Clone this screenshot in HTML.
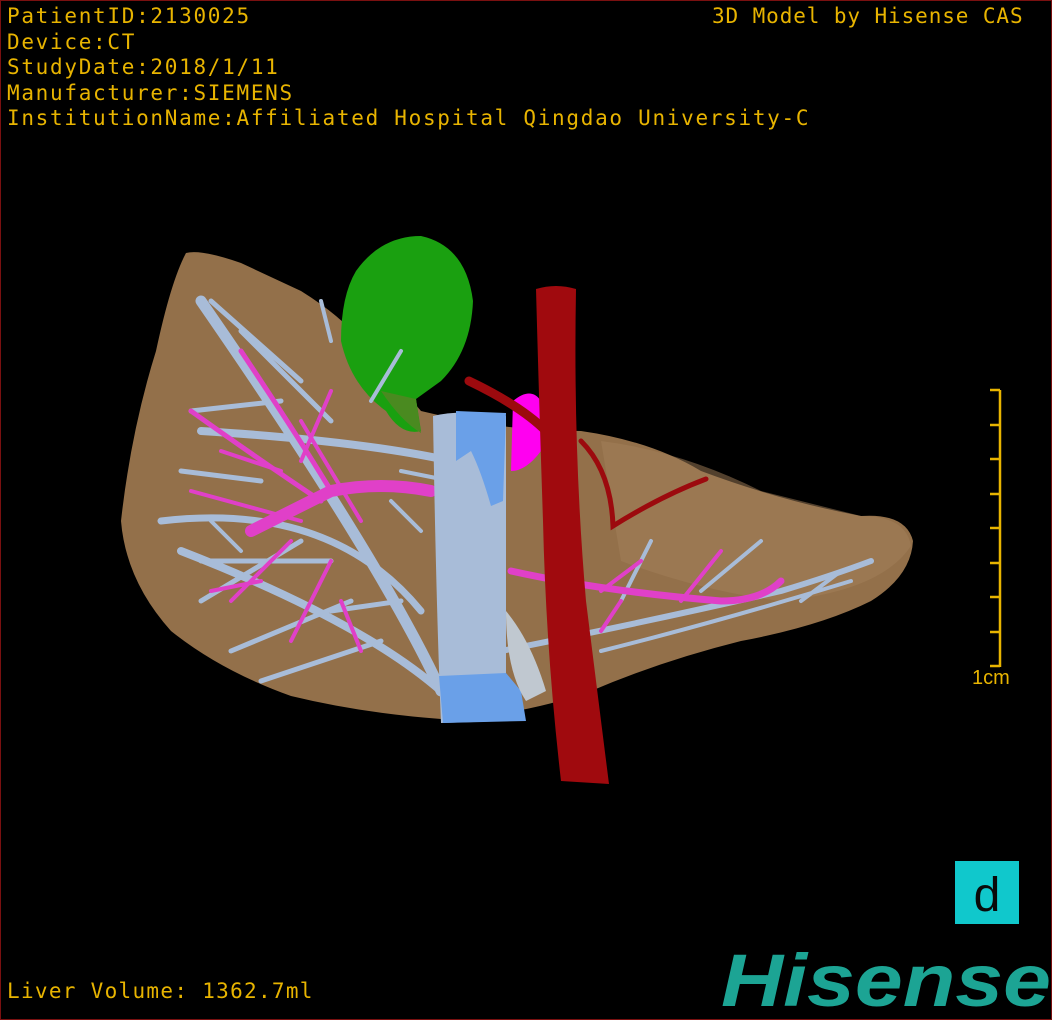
<!DOCTYPE html>
<html><head><meta charset="utf-8"><style>
html,body{margin:0;padding:0;background:#000;}
#w{position:relative;width:1052px;height:1020px;background:#000;overflow:hidden;box-sizing:border-box;border:1px solid #7a1010;}
.t{position:absolute;font-family:"DejaVu Sans Mono","Liberation Mono",monospace;color:#e8b400;font-size:21px;line-height:25.5px;white-space:pre;letter-spacing:1.7px;}
</style></head><body><div id="w">
<div class="t" style="left:6px;top:3px">PatientID:2130025
Device:CT
StudyDate:2018/1/11
Manufacturer:SIEMENS
InstitutionName:Affiliated Hospital Qingdao University-C</div>
<div class="t" style="left:711px;top:3px;letter-spacing:0.9px">3D Model by Hisense CAS</div>
<div class="t" style="left:6px;top:978px;letter-spacing:1.3px">Liver Volume: 1362.7ml</div>
<div class="t" style="left:971px;top:665px;font-family:'Liberation Sans',sans-serif;font-size:20px;letter-spacing:0">1cm</div>
<svg width="1052" height="1020" style="position:absolute;left:0;top:0" viewBox="0 0 1052 1020">
<g stroke="#e8b400" stroke-width="2.5" fill="none">
<line x1="999" y1="389" x2="999" y2="666"/>
<line x1="989" y1="389" x2="999" y2="389"/><line x1="989" y1="424" x2="999" y2="424"/>
<line x1="989" y1="458" x2="999" y2="458"/><line x1="989" y1="493" x2="999" y2="493"/>
<line x1="989" y1="527" x2="999" y2="527"/><line x1="989" y1="562" x2="999" y2="562"/>
<line x1="989" y1="596" x2="999" y2="596"/><line x1="989" y1="631" x2="999" y2="631"/>
<line x1="989" y1="665" x2="999" y2="665"/>
</g>
<path d="M185 252 Q200 248 240 262 L300 290 Q340 315 360 340 L420 410 Q500 430 580 430 Q650 440 700 470 Q780 500 860 515 Q905 512 912 540 Q910 575 870 600 Q820 625 740 640 Q660 660 590 690 Q520 715 440 718 Q360 712 290 695 Q220 670 170 630 Q125 580 120 520 Q130 430 155 350 Q170 280 185 252 Z" fill="#93704a"/>
<path d="M600 440 Q680 450 760 490 L860 515 Q905 515 910 545 Q880 590 780 600 Q700 590 620 560 Z" fill="#a3805a" opacity="0.5"/>
<path d="M355 270 Q380 235 420 235 Q465 245 472 300 Q470 350 440 380 L415 398 L420 430 Q400 435 385 410 Q350 385 340 340 Q340 295 355 270 Z" fill="#1aa010"/>
<path d="M380 390 Q400 420 420 432 L415 398 Z" fill="#4a8a20"/>
<g stroke="#a8bcd8" stroke-linecap="round" fill="none">
<path d="M440 690 Q380 560 200 300" stroke-width="11"/>
<path d="M440 690 Q360 620 180 550" stroke-width="8"/>
<path d="M420 610 Q330 500 160 520" stroke-width="7"/>
<path d="M450 460 Q360 440 200 430" stroke-width="8"/>
<path d="M330 420 L240 330 M300 380 L210 300 M280 400 L190 410 M260 480 L180 470 M300 540 L200 600 M350 600 L230 650 M380 640 L260 680 M330 560 L200 560 M400 600 L330 610" stroke-width="5"/>
<path d="M500 650 Q650 620 780 590 Q830 575 870 560" stroke-width="6"/>
<path d="M600 650 Q720 620 850 580 M700 590 L760 540 M620 600 L650 540 M800 600 L840 570" stroke-width="4"/>
<path d="M370 400 L400 350 M330 340 L320 300 M240 550 L210 520 M420 530 L390 500 M450 480 L400 470" stroke-width="4"/>
</g>
<g stroke="#e040c8" stroke-linecap="round" fill="none">
<path d="M430 490 Q380 480 330 490 L250 530" stroke-width="12"/>
<path d="M330 490 Q300 440 240 350" stroke-width="5"/>
<path d="M320 500 Q260 460 190 410" stroke-width="5"/>
<path d="M300 520 L190 490 M290 540 L230 600 M330 560 L290 640 M360 520 L300 420 M260 580 L210 590 M340 600 L360 650 M280 470 L220 450 M300 460 L330 390" stroke-width="4"/>
<path d="M510 570 Q600 590 720 600 Q760 600 780 580" stroke-width="7"/>
<path d="M600 590 L640 560 M680 600 L720 550 M620 600 L600 630" stroke-width="4"/>
</g>
<path d="M432 415 Q460 408 505 415 L505 720 L440 722 Q435 600 432 415 Z" fill="#a8bcd8"/>
<path d="M455 410 L505 412 L502 500 L490 505 Q480 470 470 450 L455 460 Z" fill="#6aa0e8"/>
<path d="M438 675 L505 672 L520 690 L525 720 L442 722 Z" fill="#6aa0e8"/>
<path d="M505 610 Q530 640 545 690 L525 700 Q505 670 505 610 Z" fill="#c0c8d0"/>
<path d="M512 400 Q530 385 540 400 L540 450 Q525 470 510 470 Z" fill="#ff00f0"/>
<g stroke="#9c0a0e" stroke-linecap="round" fill="none">
<path d="M468 380 Q520 405 545 430" stroke-width="9"/>
<path d="M580 440 Q610 470 612 525 Q660 495 705 478" stroke-width="5"/>
</g>
<path d="M535 288 Q555 282 575 288 Q572 450 585 600 Q600 720 608 783 L560 780 Q545 650 542 520 Q538 400 535 288 Z" fill="#a00a0e"/>
<rect x="954" y="860" width="64" height="63" fill="#10c8cc"/>
<text x="986" y="910" font-family="Liberation Sans,sans-serif" font-size="48" fill="#0a0a0a" text-anchor="middle">d</text>
<text x="720" y="1005" font-family="Liberation Sans,sans-serif" font-weight="bold" font-style="italic" font-size="74" fill="#1ca494" textLength="330" lengthAdjust="spacingAndGlyphs">Hisense</text>
</svg>
</div></body></html>
